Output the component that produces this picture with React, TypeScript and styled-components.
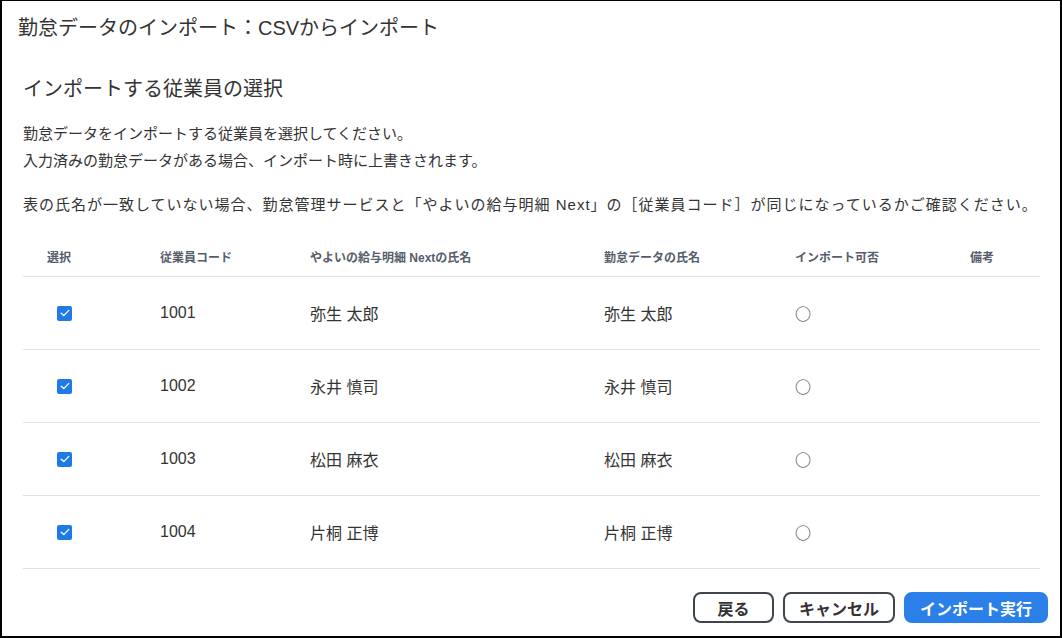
import React from "react";
import styled, { createGlobalStyle } from "styled-components";

const GlobalStyle = createGlobalStyle`
  html, body {
    margin: 0;
    padding: 0;
    background: #ffffff;
  }
  body {
    font-family: "Liberation Sans", "Noto Sans CJK JP", sans-serif;
    color: #333333;
  }
`;

type Employee = {
  code: string;
  yayoiName: string;
  attendanceName: string;
  importable: string;
  note: string;
};

const employees: Employee[] = [
  { code: "1001", yayoiName: "弥生 太郎", attendanceName: "弥生 太郎", importable: "○", note: "" },
  { code: "1002", yayoiName: "永井 慎司", attendanceName: "永井 慎司", importable: "○", note: "" },
  { code: "1003", yayoiName: "松田 麻衣", attendanceName: "松田 麻衣", importable: "○", note: "" },
  { code: "1004", yayoiName: "片桐 正博", attendanceName: "片桐 正博", importable: "○", note: "" },
];

const columns = ["選択", "従業員コード", "やよいの給与明細 Nextの氏名", "勤怠データの氏名", "インポート可否", "備考"];

const CheckIcon = () => (
  <svg width="10" height="8" viewBox="0 0 10 8" fill="none">
    <path d="M1.2 4.2 L3.8 6.6 L8.8 1.4" stroke="#ffffff" strokeWidth="1.3" strokeLinecap="round" strokeLinejoin="round" />
  </svg>
);

const App = () => {
  return (
    <>
      <GlobalStyle />
      <Dialog>
        <DialogTitle>勤怠データのインポート：CSVからインポート</DialogTitle>
        <Body>
          <SectionTitle>インポートする従業員の選択</SectionTitle>
          <Description>
            <p>勤怠データをインポートする従業員を選択してください。</p>
            <p>入力済みの勤怠データがある場合、インポート時に上書きされます。</p>
          </Description>
          <Notice>
            表の氏名が一致していない場合、勤怠管理サービスと「やよいの給与明細 Next」の［従業員コード］が同じになっているかご確認ください。
          </Notice>
          <Table>
            <HeaderRow>
              {columns.map((c) => (
                <HeaderCell key={c}>{c}</HeaderCell>
              ))}
            </HeaderRow>
            {employees.map((e) => (
              <Row key={e.code}>
                <CheckCell>
                  <Checkbox>
                    <CheckIcon />
                  </Checkbox>
                </CheckCell>
                <Cell>{e.code}</Cell>
                <Cell>{e.yayoiName}</Cell>
                <Cell>{e.attendanceName}</Cell>
                <MarkCell>{e.importable}</MarkCell>
                <Cell>{e.note}</Cell>
              </Row>
            ))}
          </Table>
        </Body>
        <Footer>
          <Button>戻る</Button>
          <Button>キャンセル</Button>
          <Button $primary>インポート実行</Button>
        </Footer>
      </Dialog>
    </>
  );
};

const Dialog = styled.div`
  box-sizing: border-box;
  width: 1062px;
  height: 638px;
  border: 2px solid #000000;
  border-top-width: 1px;
  display: flex;
  flex-direction: column;
  background: #ffffff;
`;

const DialogTitle = styled.div`
  padding: 15px 0 0 16px;
  font-size: 20px;
  line-height: 24px;
  color: #333333;
`;

const Body = styled.div`
  padding: 0 20px 0 21px;
  display: flex;
  flex-direction: column;
`;

const SectionTitle = styled.div`
  margin-top: 35px;
  font-size: 20px;
  line-height: 28px;
  color: #333333;
`;

const Description = styled.div`
  margin-top: 17px;
  font-size: 15px;
  line-height: 27px;
  & p {
    margin: 0;
  }
`;

const Notice = styled.div`
  margin-top: 17px;
  font-size: 15px;
  line-height: 27px;
  letter-spacing: 1px;
  white-space: nowrap;
`;

const gridColumns = "137px 150px 294px 191px 175px 1fr";

const Table = styled.div`
  margin-top: 18px;
  display: flex;
  flex-direction: column;
`;

const HeaderRow = styled.div`
  display: grid;
  grid-template-columns: ${gridColumns};
  height: 40px;
  align-items: center;
  border-bottom: 1px solid #e3e3e3;
`;

const HeaderCell = styled.div`
  font-size: 12px;
  font-weight: 700;
  color: #565d6c;
  &:first-child {
    padding-left: 24px;
  }
`;

const Row = styled.div`
  display: grid;
  grid-template-columns: ${gridColumns};
  height: 72px;
  align-items: center;
  border-bottom: 1px solid #e3e3e3;
`;

const Cell = styled.div`
  font-size: 16px;
  color: #333333;
`;

const CheckCell = styled.div`
  padding-left: 34px;
  display: flex;
  align-items: center;
`;

const MarkCell = styled.div`
  font-family: "Noto Sans CJK JP", sans-serif;
  font-size: 16px;
  color: #333333;
`;

const Checkbox = styled.span`
  width: 15px;
  height: 15px;
  border-radius: 2px;
  background: #1f7ae8;
  display: inline-flex;
  align-items: center;
  justify-content: center;
`;

const Footer = styled.div`
  margin-top: auto;
  padding: 0 12px 13px 0;
  display: flex;
  justify-content: flex-end;
  gap: 9px;
`;

const Button = styled.button<{ $primary?: boolean }>`
  box-sizing: border-box;
  height: 31px;
  padding: 0 14px;
  min-width: 81px;
  border-radius: 8px;
  border: 2px solid ${(p) => (p.$primary ? "#2a7fe8" : "#3f4550")};
  background: ${(p) => (p.$primary ? "#2a7fe8" : "#ffffff")};
  color: ${(p) => (p.$primary ? "#ffffff" : "#333333")};
  font-family: "Liberation Sans", "Noto Sans CJK JP", sans-serif;
  font-size: 16px;
  font-weight: 700;
  cursor: pointer;
`;

export default App;
